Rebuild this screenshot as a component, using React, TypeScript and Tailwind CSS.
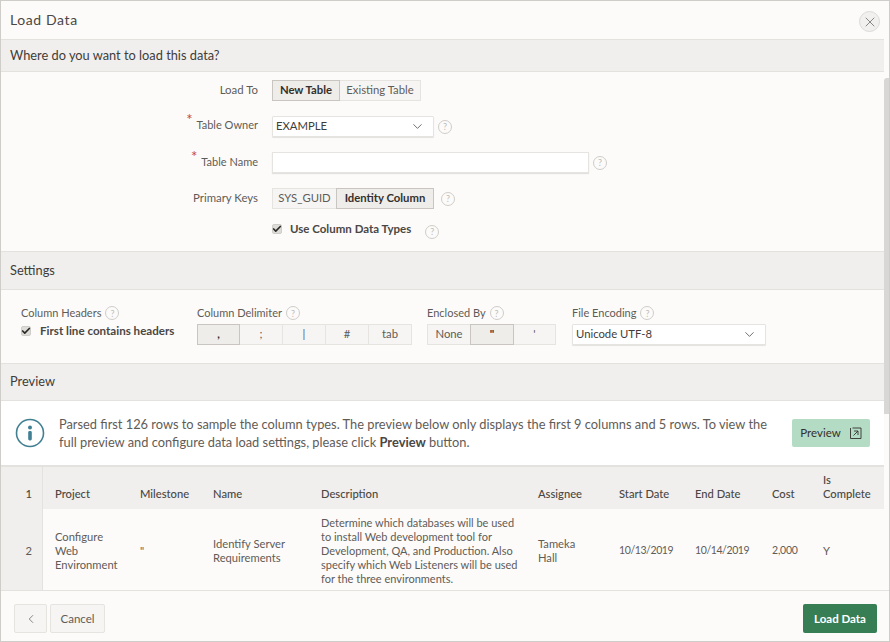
import { Check, ChevronDown, ChevronLeft, X } from "lucide-react";
import type { ReactNode } from "react";

function HelpIcon({ className = "" }: { className?: string }) {
  return (
    <span
      className={`flex size-[14px] shrink-0 items-center justify-center rounded-full border border-[#cfcdc9] text-[9px] leading-none text-[#bdbbb7] ${className}`}
    >
      ?
    </span>
  );
}

function SectionHeader({ title, className }: { title: string; className: string }) {
  return (
    <div className={`flex items-center border-y border-[#e4e2df] bg-[#f0efed] pl-[9px] text-[12.8px] text-[#3f3c39] ${className}`}>
      {title}
    </div>
  );
}

function Segmented({
  items,
  active,
  widths,
}: {
  items: string[];
  active: number;
  widths: string[];
}) {
  return (
    <div className="flex h-[21px]">
      {items.map((item, i) => (
        <div
          key={item}
          className={`-ml-px flex items-center justify-center border pb-[1px] text-[11.3px] first:ml-0 ${widths[i]} ${
            i === active
              ? "z-10 border-[#c9c6c2] bg-[#efedea] font-bold text-[#33302d]"
              : "border-[#e6e4e1] bg-[#f6f5f3] text-[#5f5c58]"
          }`}
        >
          {item}
        </div>
      ))}
    </div>
  );
}

function Checkbox() {
  return (
    <span className="flex size-[10px] shrink-0 items-center justify-center rounded-[2px] border border-[#cfcdc9] bg-[#dedcd9] text-[#2b2926]">
      <Check className="size-[10px] shrink-0" strokeWidth={4} />
    </span>
  );
}

function FormRow({
  label,
  required,
  children,
  className,
  labelClassName = "pb-[2px]",
}: {
  label: string;
  required?: boolean;
  children: ReactNode;
  className: string;
  labelClassName?: string;
}) {
  return (
    <div className={`flex items-center ${className}`}>
      <div className={`flex w-[257px] justify-end text-[#5f5c58] ${labelClassName} ${required ? "text-[11px]" : "text-[11.4px]"}`}>
        {required ? <span className="-mt-[5px] mr-[4px] text-[15px] leading-none text-[#c74634]">*</span> : null}
        {label}
      </div>
      <div className="ml-[14px] flex items-center">{children}</div>
    </div>
  );
}

function SelectBox({ value, className }: { value: string; className: string }) {
  return (
    <div
      className={`flex h-[21px] items-center justify-between rounded-[1px] border border-[#e6e4e1] bg-white pl-[3px] pr-[8px] text-[11.3px] text-[#3f3c39] shadow-[0_1px_1px_rgba(0,0,0,0.1)] ${className}`}
    >
      <span className="pb-[1px]">{value}</span>
      <ChevronDown className="size-[15px] text-[#4a4744]" strokeWidth={1.25} />
    </div>
  );
}

const headers = [
  ["Project", "w-[85px] pl-[12px]"],
  ["Milestone", "w-[73px] pl-[12px]"],
  ["Name", "w-[108px] pl-[12px]"],
  ["Description", "w-[217px] pl-[12px]"],
  ["Assignee", "w-[81px] pl-[12px]"],
  ["Start Date", "w-[76px] pl-[12px]"],
  ["End Date", "w-[77px] pl-[12px]"],
  ["Cost", "w-[51px] pl-[12px]"],
  ["Is Complete", "w-[61px] pl-[12px]"],
];

export default function App() {
  return (
    <div className="relative flex h-[642px] w-[890px] flex-col overflow-hidden border border-[#cfcdca] bg-[#fcfbfa] font-['Lato',sans-serif]">
      <header className="flex h-[38px] shrink-0 items-center justify-between pl-[9px] pr-[9px]">
        <h1 className="mb-[2px] text-[14px] tracking-[0.6px] text-[#4a4744]">Load Data</h1>
        <button className="mt-[3px] flex size-[21px] items-center justify-center rounded-full border border-[#dcdad7] bg-[#f1f0ee] text-[#55524f]">
          <X className="size-[16px]" strokeWidth={1} />
        </button>
      </header>

      <main className="flex min-h-0 flex-1 flex-col overflow-hidden pr-[5px]">
        <SectionHeader title="Where do you want to load this data?" className="h-[33px] shrink-0" />

        <section className="h-[179px] shrink-0">
          <FormRow label="Load To" className="mt-[8px] h-[21px]">
            <Segmented items={["New Table", "Existing Table"]} active={0} widths={["w-[68px]", "w-[82px]"]} />
          </FormRow>
          <FormRow label="Table Owner" required className="mt-[15px] h-[21px]">
            <SelectBox value="EXAMPLE" className="w-[162px]" />
            <HelpIcon className="ml-[4px]" />
          </FormRow>
          <FormRow label="Table Name" required labelClassName="pb-0" className="mt-[15px] h-[21px]">
            <div className="h-[21px] w-[317px] border border-[#e6e4e1] bg-white shadow-[0_1px_1px_rgba(0,0,0,0.1)]" />
            <HelpIcon className="ml-[4px]" />
          </FormRow>
          <FormRow label="Primary Keys" className="mt-[15px] h-[21px]">
            <Segmented items={["SYS_GUID", "Identity Column"]} active={1} widths={["w-[65px]", "w-[98px]"]} />
            <HelpIcon className="ml-[7px]" />
          </FormRow>
          <div className="ml-[271px] mt-[11px] flex h-[18px] items-center">
            <Checkbox />
            <span className="ml-[8px] text-[11.5px] font-bold text-[#4a4744]">Use Column Data Types</span>
            <HelpIcon className="ml-[14px] mt-[5px]" />
          </div>
        </section>

        <SectionHeader title="Settings" className="h-[39px] shrink-0" />

        <section className="flex h-[73px] shrink-0 pl-[20px] pt-[16px]">
          <div className="w-[176px]">
            <div className="flex h-[14px] items-center gap-[4px] text-[11px] text-[#5f5c58]">
              Column Headers <HelpIcon />
            </div>
            <div className="mt-[2px] flex items-center">
              <Checkbox />
              <span className="ml-[9px] text-[11.6px] font-bold text-[#4a4744]">First line contains headers</span>
            </div>
          </div>
          <div className="w-[230px]">
            <div className="flex h-[14px] items-center gap-[4px] text-[11px] text-[#5f5c58]">
              Column Delimiter <HelpIcon />
            </div>
            <div className="mt-[4px]">
              <Segmented
                items={[",", ";", "|", "#", "tab"]}
                active={0}
                widths={["w-[43px]", "w-[44px]", "w-[44px]", "w-[44px]", "w-[44px]"]}
              />
            </div>
          </div>
          <div className="w-[145px]">
            <div className="flex h-[14px] items-center gap-[4px] text-[11px] text-[#5f5c58]">
              Enclosed By <HelpIcon />
            </div>
            <div className="mt-[4px]">
              <Segmented items={["None", '"', "'"]} active={1} widths={["w-[44px]", "w-[44px]", "w-[43px]"]} />
            </div>
          </div>
          <div>
            <div className="flex h-[14px] items-center gap-[4px] text-[11px] text-[#5f5c58]">
              File Encoding <HelpIcon />
            </div>
            <div className="mt-[4px]">
              <SelectBox value="Unicode UTF-8" className="w-[194px]" />
            </div>
          </div>
        </section>

        <SectionHeader title="Preview" className="h-[38px] shrink-0" />

        <section className="flex h-[64px] shrink-0 items-center bg-white pl-[14px] pr-[14px]">
          <svg viewBox="0 0 30 30" className="size-[30px] shrink-0 text-[#417f92]">
            <circle cx="15" cy="15" r="13.5" fill="none" stroke="currentColor" strokeWidth="1.6" />
            <circle cx="15" cy="9.5" r="2" fill="currentColor" />
            <rect x="13.2" y="13" width="3.6" height="9.5" rx="1.4" fill="currentColor" />
          </svg>
          <p className="ml-[14px] w-[719px] text-[12.84px] leading-[18px] text-[#5f5c58]">
            Parsed first 126 rows to sample the column types. The preview below only displays the first 9 columns and 5
            rows. To view the full preview and configure data load settings, please click{" "}
            <b className="font-bold text-[#4a4744]">Preview</b> button.
          </p>
          <button className="ml-auto flex h-[28px] w-[78px] items-center justify-center gap-[8px] rounded-[2px] bg-[#b4dcc4] text-[11.5px] text-[#33302d]">
            Preview
            <svg viewBox="0 0 13 13" className="size-[13px]" fill="none" stroke="currentColor" strokeWidth="0.9">
              <path d="M3.5 1h8.5v10.5H1.5V1" />
              <path d="M4.5 8.5 9 4M5 4h4v4" />
            </svg>
          </button>
        </section>

        <section className="min-h-0 flex-1 overflow-hidden border-t-2 border-[#e4e2df] text-[11.2px]">
          <div className="flex h-[42px] bg-[#f0efed] font-medium text-[#4a4744]">
            <div className="flex w-[42px] items-end justify-end border-r border-[#e4e2df] pb-[8px] pr-[10px] leading-[14px]">1</div>
            {headers.map(([label, cls]) => (
              <div key={label} className={`flex items-end pb-[8px] leading-[14px] ${cls}`}>
                {label}
              </div>
            ))}
          </div>
          <div className="flex h-[84px] items-center text-[#5f5c58]">
            <div className="flex h-full w-[42px] items-center justify-end border-r border-[#e4e2df] bg-[#f0efed] pr-[10px]">2</div>
            <div className="w-[85px] pl-[12px] leading-[14px]">Configure Web Environment</div>
            <div className="w-[73px] pl-[12px]">"</div>
            <div className="w-[108px] pl-[12px] leading-[14px]">Identify Server Requirements</div>
            <div className="w-[217px] pl-[12px] text-[11px] leading-[14px]">
              Determine which databases will be used to install Web development tool for Development, QA, and Production.
              Also specify which Web Listeners will be used for the three environments.
            </div>
            <div className="w-[81px] pl-[12px] pr-[20px] leading-[14px]">Tameka Hall</div>
            <div className="w-[76px] pl-[12px] text-[10.5px] tracking-[-0.4px]">10/13/2019</div>
            <div className="w-[77px] pl-[12px] text-[10.5px] tracking-[-0.4px]">10/14/2019</div>
            <div className="w-[51px] pl-[12px] text-[10.5px] tracking-[-0.2px]">2,000</div>
            <div className="w-[61px] pl-[12px]">Y</div>
          </div>
        </section>
      </main>

      <footer className="flex h-[51px] shrink-0 items-start justify-between border-t border-[#e4e2df] pl-[13px] pr-[12px] pt-[13px]">
        <div className="flex gap-[3px]">
          <button className="flex h-[29px] w-[33px] items-center justify-center rounded-[2px] border border-[#e6e4e1] bg-[#f6f5f3] text-[#5f5c58]">
            <ChevronLeft className="size-[14px]" strokeWidth={1.25} />
          </button>
          <button className="h-[29px] w-[55px] rounded-[2px] border border-[#e6e4e1] bg-[#f6f5f3] text-[11.5px] text-[#5f5c58]">
            Cancel
          </button>
        </div>
        <button className="h-[29px] w-[74px] rounded-[2px] bg-[#377e55] text-[11.5px] font-bold text-white">Load Data</button>
      </footer>

      {/* scrollbar thumb sits over the gutter */}
      <div className="absolute left-[883px] top-[77px] h-[336px] w-[5px] rounded-tl-[3px] bg-[#d8d7d5]" />
    </div>
  );
}
